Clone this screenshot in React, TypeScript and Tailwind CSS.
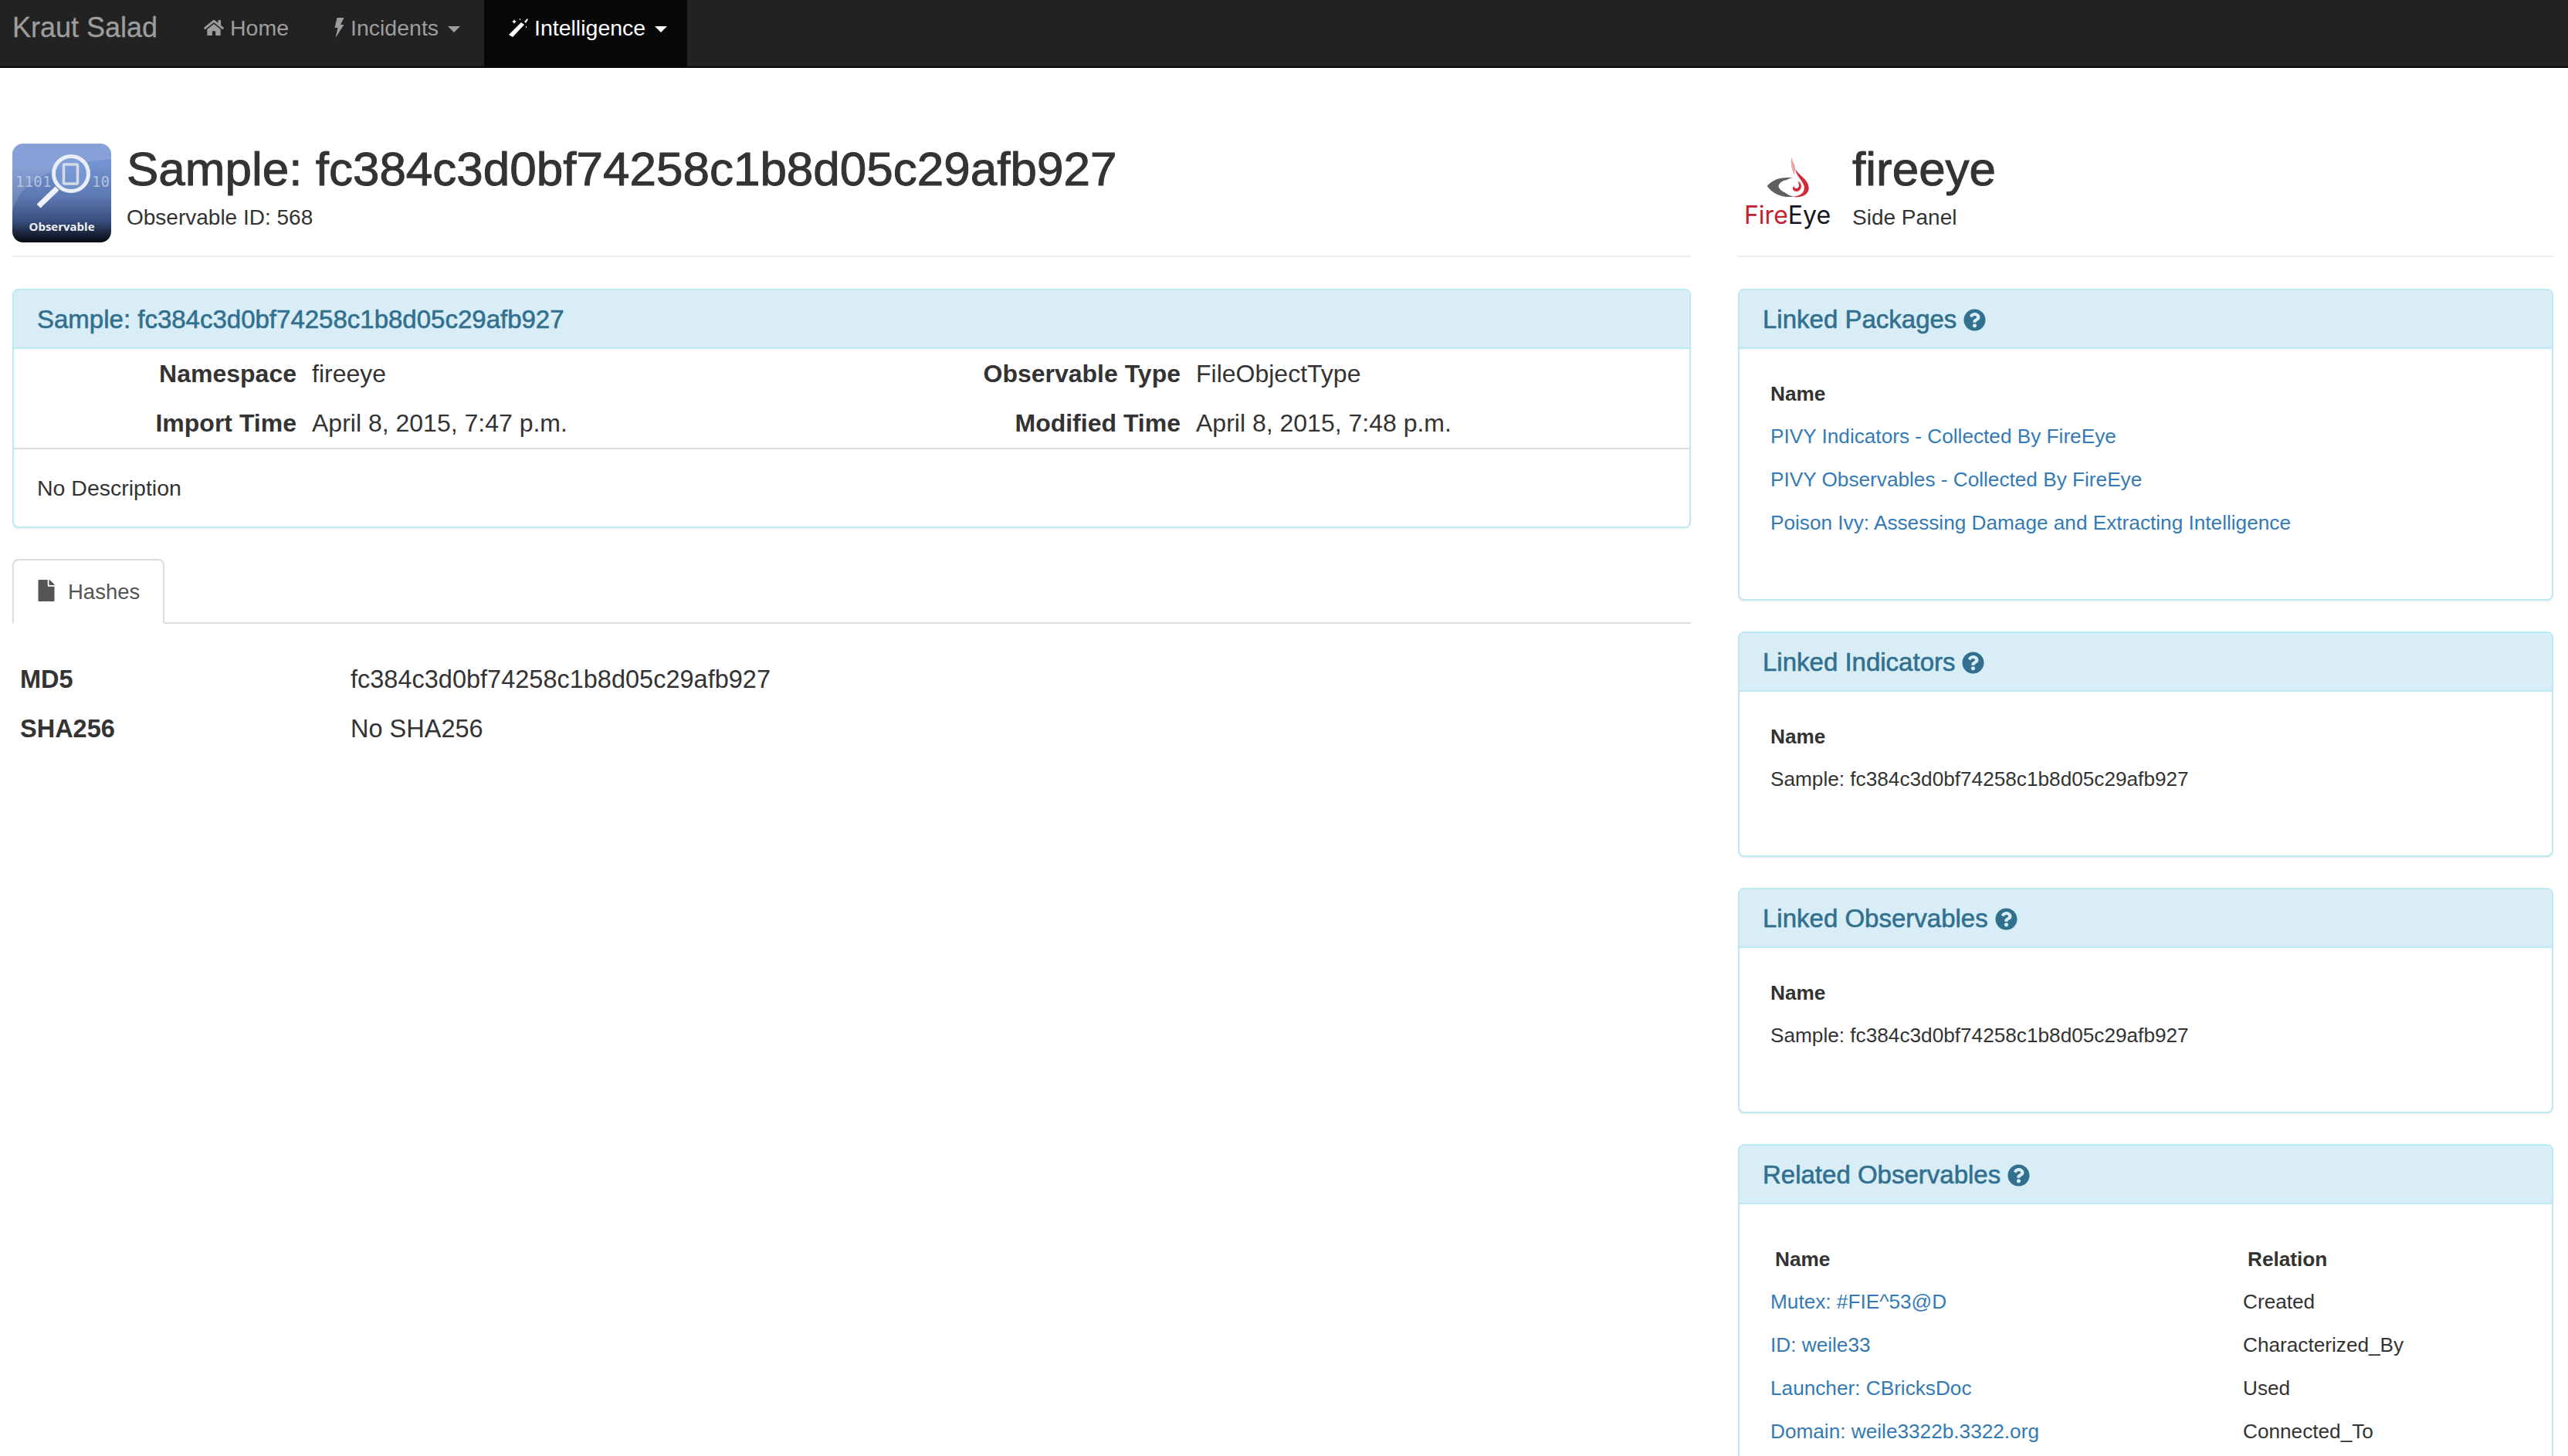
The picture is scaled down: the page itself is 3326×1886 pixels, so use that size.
import React from "react";
import { FaHome, FaFile, FaQuestionCircle } from "react-icons/fa";

const Caret = ({ cls }: { cls: string }) => (
  <span className={`inline-block w-0 h-0 border-x-[8px] border-x-transparent border-t-[8px] ml-[12px] ${cls}`} />
);

const ObservableIcon = () => (
  <div className="relative w-[128px] h-[128px] shrink-0">
    <svg width="128" height="128" viewBox="0 0 128 128" className="block">
      <defs>
        <linearGradient id="obg" x1="0" y1="0" x2="0" y2="1">
          <stop offset="0" stopColor="#7392d0" />
          <stop offset="0.2" stopColor="#7493d2" />
          <stop offset="0.55" stopColor="#5a77b0" />
          <stop offset="0.78" stopColor="#3a507e" />
          <stop offset="1" stopColor="#04070f" />
        </linearGradient>
      </defs>
      <rect width="128" height="128" rx="14" fill="url(#obg)" />
      <path d="M0 90 C6 52 50 26 128 20 L128 14 Q128 0 114 0 L14 0 Q0 0 0 14 Z" fill="#ffffff" opacity="0.14" />
      <text x="4" y="56" fontFamily="'DejaVu Sans Mono', monospace" fontSize="19" fill="#c9d2e4" opacity="0.8" letterSpacing="0.2">1101</text>
      <text x="103" y="56" fontFamily="'DejaVu Sans Mono', monospace" fontSize="19" fill="#c9d2e4" opacity="0.8">10</text>
      <circle cx="76" cy="39" r="22.5" fill="#7f9fda" fillOpacity="0.6" stroke="#e9eef7" strokeWidth="5" />
      <rect x="66.5" y="27" width="18" height="25" rx="1" fill="none" stroke="#d5dbe6" strokeWidth="3.5" />
      <path d="M58 58 L34 81" stroke="#eef2f8" strokeWidth="7" />
    </svg>
    <span className="absolute left-0 right-0 bottom-[13px] text-center text-[15px] leading-[16px] font-bold text-[#eef1f5] font-['Open_Sans',sans-serif]">Observable</span>
  </div>
);

const FireEyeLogo = () => (
  <div className="w-[116px] shrink-0 flex flex-col items-center">
    <svg width="58" height="54" viewBox="0 0 174 162" className="block">
      <path d="M8 117 C30 92 62 80 108 85 C90 88 72 96 68 118 C66 135 78 150 112 158 C70 164 32 150 8 117 Z" fill="#5f5f5f" />
      <path d="M52 117 C56 104 68 96 84 93 C74 104 74 128 88 144 C70 142 56 132 52 117 Z" fill="#fff" />
      <path d="M104 5 C98 26 102 40 112 72 C120 56 118 40 112 30 C108 22 106 14 104 5 Z" fill="#e7a5a6" />
      <path d="M118 50 C130 76 170 90 170 125 C170 150 140 165 108 158 C140 156 156 140 152 118 C146 92 122 82 118 50 Z" fill="#d12a36" />
      <path d="M128 98 C146 106 146 136 122 138 C108 138 102 124 114 118 C110 128 130 130 132 116 C132 108 130 104 128 98 Z" fill="#d12a36" />
    </svg>
    <div className="mt-[8px] text-[32px] leading-[30px] font-['Inter',sans-serif] whitespace-nowrap"><span className="text-[#c5202f]">Fire</span><span className="text-[#14151f]">Eye</span></div>
  </div>
);

const Panel = ({ title, help, children, cls }: { title: string; help?: boolean; children: React.ReactNode; cls?: string }) => (
  <section className={`border-2 border-[#bce8f1] rounded-[8px] overflow-hidden bg-white shadow-[0_2px_2px_rgba(0,0,0,0.05)] ${cls ?? ""}`}>
    <div className="h-[76px] bg-[#d9edf7] border-b-2 border-[#bce8f1] px-[30px] pt-[2px] flex items-center gap-[9px] text-[33px] text-[#31708f] [-webkit-text-stroke:0.6px_#31708f]">
      <span>{title}</span>
      {help && <FaQuestionCircle className="w-[29px] h-[29px] text-[#31708f]" />}
    </div>
    {children}
  </section>
);

const Link = ({ children }: { children: React.ReactNode }) => <span className="text-[#337ab7]">{children}</span>;

const NameList = ({ items, linked }: { items: string[]; linked?: boolean }) => (
  <div className="px-[40px] pt-[31px] text-[26.2px] leading-[40px] text-[#333]">
    <div className="font-bold h-[54px] flex items-center">Name</div>
    {items.map((t) => (
      <div key={t} className="h-[56px] flex items-center">{linked ? <Link>{t}</Link> : t}</div>
    ))}
  </div>
);

export default function App() {
  const rows = [
    ["Mutex: #FIE^53@D", "Created"],
    ["ID: weile33", "Characterized_By"],
    ["Launcher: CBricksDoc", "Used"],
    ["Domain: weile3322b.3322.org", "Connected_To"],
  ];
  return (
    <div className="w-[3326px] h-[1886px] overflow-hidden bg-white text-[#333] font-['Liberation_Sans',Arial,sans-serif]">
      <nav className="h-[88px] bg-[#222] border-b-[2px] border-[#080808] flex items-stretch text-[28.5px]">
        <div className="w-[234px] pl-[16px] pt-[15px] text-[36px] leading-[42px] text-[#9d9d9d] [-webkit-text-stroke:0.3px_#9d9d9d]">Kraut Salad</div>
        <div className="w-[168px] flex items-start gap-[8px] pl-[30px] pt-[20px] leading-[32px] text-[#9d9d9d]">
          <FaHome className="w-[26px] h-[26px] mt-[3px]" />
          <span>Home</span>
        </div>
        <div className="w-[225px] flex items-start pl-[30px] pt-[20px] leading-[32px] text-[#9d9d9d]">
          <svg width="15" height="26" viewBox="0 0 14 26" className="mr-[7px] fill-current mt-[3px] shrink-0">
            <path d="M4 0h9L8.5 9H13L2 26l3-13H1z" />
          </svg>
          <span>Incidents</span>
          <Caret cls="border-t-[#9d9d9d] mt-[14px]" />
        </div>
        <div className="w-[263px] bg-[#080808] -mb-[2px] flex items-start pl-[31px] pt-[20px] leading-[32px] text-white">
          <svg width="26" height="25" viewBox="0 0 26 25" className="mr-[8px] mt-[3px] shrink-0 fill-current">
            <path d="M17 6l4 3L6 25l-5-3z" />
            <path d="M25 1l1 1-3 5-2-2z" />
            <path d="M8 2l1 2 2 1-2 1-1 2-1-2-2-1 2-1zM15 1h1v2h-1zM23 11h1v2h-1z" />
          </svg>
          <span>Intelligence</span>
          <Caret cls="border-t-white mt-[14px]" />
        </div>
      </nav>

      <div className="flex gap-[61px] pl-[16px] pr-[19px]">
        <main className="w-[2174px]">
          <header className="h-[245px] pt-[98px] border-b-2 border-[#eee] flex gap-[20px]">
            <ObservableIcon />
            <div>
              <h1 className="text-[62px] leading-[66px] [-webkit-text-stroke:1px_#333]">Sample: fc384c3d0bf74258c1b8d05c29afb927</h1>
              <p className="text-[28px] leading-[40px] mt-[10px]">Observable ID: 568</p>
            </div>
          </header>
          <Panel title="Sample: fc384c3d0bf74258c1b8d05c29afb927" cls="mt-[41px] h-[310px]">
            <div className="h-[130px] border-b-2 border-[#ddd] grid grid-cols-[366px_785px_360px_1fr] auto-rows-[64px] text-[32px] items-center">
              <b className="text-right">Namespace</b>
              <span className="pl-[20px]">fireeye</span>
              <b className="text-right">Observable Type</b>
              <span className="pl-[20px]">FileObjectType</span>
              <b className="text-right">Import Time</b>
              <span className="pl-[20px]">April 8, 2015, 7:47 p.m.</span>
              <b className="text-right">Modified Time</b>
              <span className="pl-[20px]">April 8, 2015, 7:48 p.m.</span>
            </div>
            <div className="px-[30px] pt-[30px] text-[28.5px] leading-[40px]">No Description</div>
          </Panel>

          <div className="mt-[40px] h-[84px] border-b-2 border-[#ddd] flex">
            <div className="w-[197px] h-[84px] border-2 border-[#ddd] border-b-white rounded-t-[8px] bg-white flex items-center gap-[16px] pl-[30px] pt-[2px] text-[27.5px] text-[#555]">
              <FaFile className="w-[24px] h-[28px] -mt-[4px]" />
              <span>Hashes</span>
            </div>
          </div>

          <div className="mt-[40px] pl-[10px] text-[32.5px] leading-[64px]">
            <div className="flex"><b className="w-[428px]">MD5</b><span>fc384c3d0bf74258c1b8d05c29afb927</span></div>
            <div className="flex"><b className="w-[428px]">SHA256</b><span>No SHA256</span></div>
          </div>
        </main>

        <aside className="w-[1056px]">
          <header className="h-[245px] pt-[114px] border-b-2 border-[#eee] flex gap-[26px] pl-[6px]">
            <FireEyeLogo />
            <div className="-mt-[16px]">
              <h2 className="text-[62px] leading-[66px] [-webkit-text-stroke:1px_#333]">fireeye</h2>
              <p className="text-[28px] leading-[40px] mt-[10px]">Side Panel</p>
            </div>
          </header>
          <Panel title="Linked Packages" help cls="mt-[41px] h-[404px]">
            <NameList linked items={["PIVY Indicators - Collected By FireEye", "PIVY Observables - Collected By FireEye", "Poison Ivy: Assessing Damage and Extracting Intelligence"]} />
          </Panel>
          <Panel title="Linked Indicators" help cls="mt-[40px] h-[292px]">
            <NameList items={["Sample: fc384c3d0bf74258c1b8d05c29afb927"]} />
          </Panel>
          <Panel title="Linked Observables" help cls="mt-[40px] h-[292px]">
            <NameList items={["Sample: fc384c3d0bf74258c1b8d05c29afb927"]} />
          </Panel>
          <Panel title="Related Observables" help cls="mt-[40px] h-[440px]">
            <div className="px-[40px] pt-[45px] text-[26.2px]">
              <div className="flex h-[54px] items-center font-bold"><span className="w-[612px] pl-[6px]">Name</span><span className="pl-[6px]">Relation</span></div>
              {rows.map(([a, b]) => (
                <div key={a} className="flex h-[56px] items-center"><span className="w-[612px]"><Link>{a}</Link></span><span>{b}</span></div>
              ))}
            </div>
          </Panel>
        </aside>
      </div>
    </div>
  );
}
